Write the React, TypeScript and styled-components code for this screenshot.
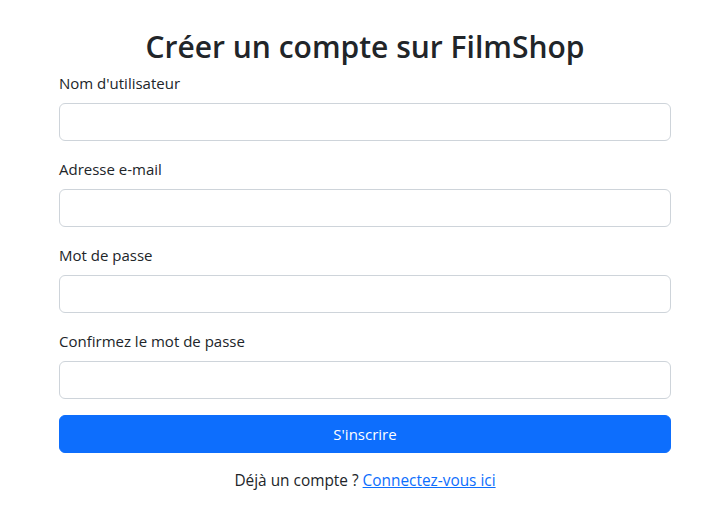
import React from "react";
import styled, { createGlobalStyle } from "styled-components";

const Global = createGlobalStyle`
  html, body { margin: 0; padding: 0; background: #fff; }
  body {
    font-family: "Open Sans", "Noto Sans", sans-serif;
    color: #212529;
    font-size: 16px;
    line-height: 1.5;
  }
  * { box-sizing: border-box; }
`;

const Page = styled.div`
  padding: 30px 42px 0 59px;
`;

const Title = styled.h2`
  margin: 0 0 8px;
  font-size: 30px;
  line-height: 33px;
  font-weight: 600;
  text-align: center;
  color: #212529;
`;

const Form = styled.form`
  display: flex;
  flex-direction: column;
`;

const Group = styled.div`
  margin-bottom: 16px;
  display: flex;
  flex-direction: column;
`;

const Label = styled.label`
  margin-bottom: 8px;
  font-size: 15px;
  line-height: 24px;
`;

const Input = styled.input`
  height: 38px;
  padding: 6px 12px;
  font-size: 16px;
  border: 1px solid #ced4da;
  border-radius: 6px;
  background: #fff;
  outline: none;
`;

const Button = styled.button`
  height: 38px;
  border: 1px solid #0d6efd;
  background: #0d6efd;
  color: #fff;
  border-radius: 6px;
  font-family: inherit;
  font-size: 15px;
  line-height: 24px;
  cursor: pointer;
`;

const Footer = styled.p`
  margin: 16px 0 0;
  text-align: center;
  font-size: 15.4px;
  line-height: 24px;
`;

const Link = styled.a`
  color: #0d6efd;
  text-decoration: underline;
`;

const fields = [
  { id: "username", label: "Nom d'utilisateur", type: "text" },
  { id: "email", label: "Adresse e-mail", type: "email" },
  { id: "password", label: "Mot de passe", type: "password" },
  { id: "confirm", label: "Confirmez le mot de passe", type: "password" },
];

export default function App() {
  return (
    <>
      <Global />
      <Page>
        <Title>Créer un compte sur FilmShop</Title>
        <Form onSubmit={(e) => e.preventDefault()}>
          {fields.map((f) => (
            <Group key={f.id}>
              <Label htmlFor={f.id}>{f.label}</Label>
              <Input id={f.id} type={f.type} />
            </Group>
          ))}
          <Button type="submit">S'inscrire</Button>
        </Form>
        <Footer>
          Déjà un compte ? <Link href="#">Connectez-vous ici</Link>
        </Footer>
      </Page>
    </>
  );
}
